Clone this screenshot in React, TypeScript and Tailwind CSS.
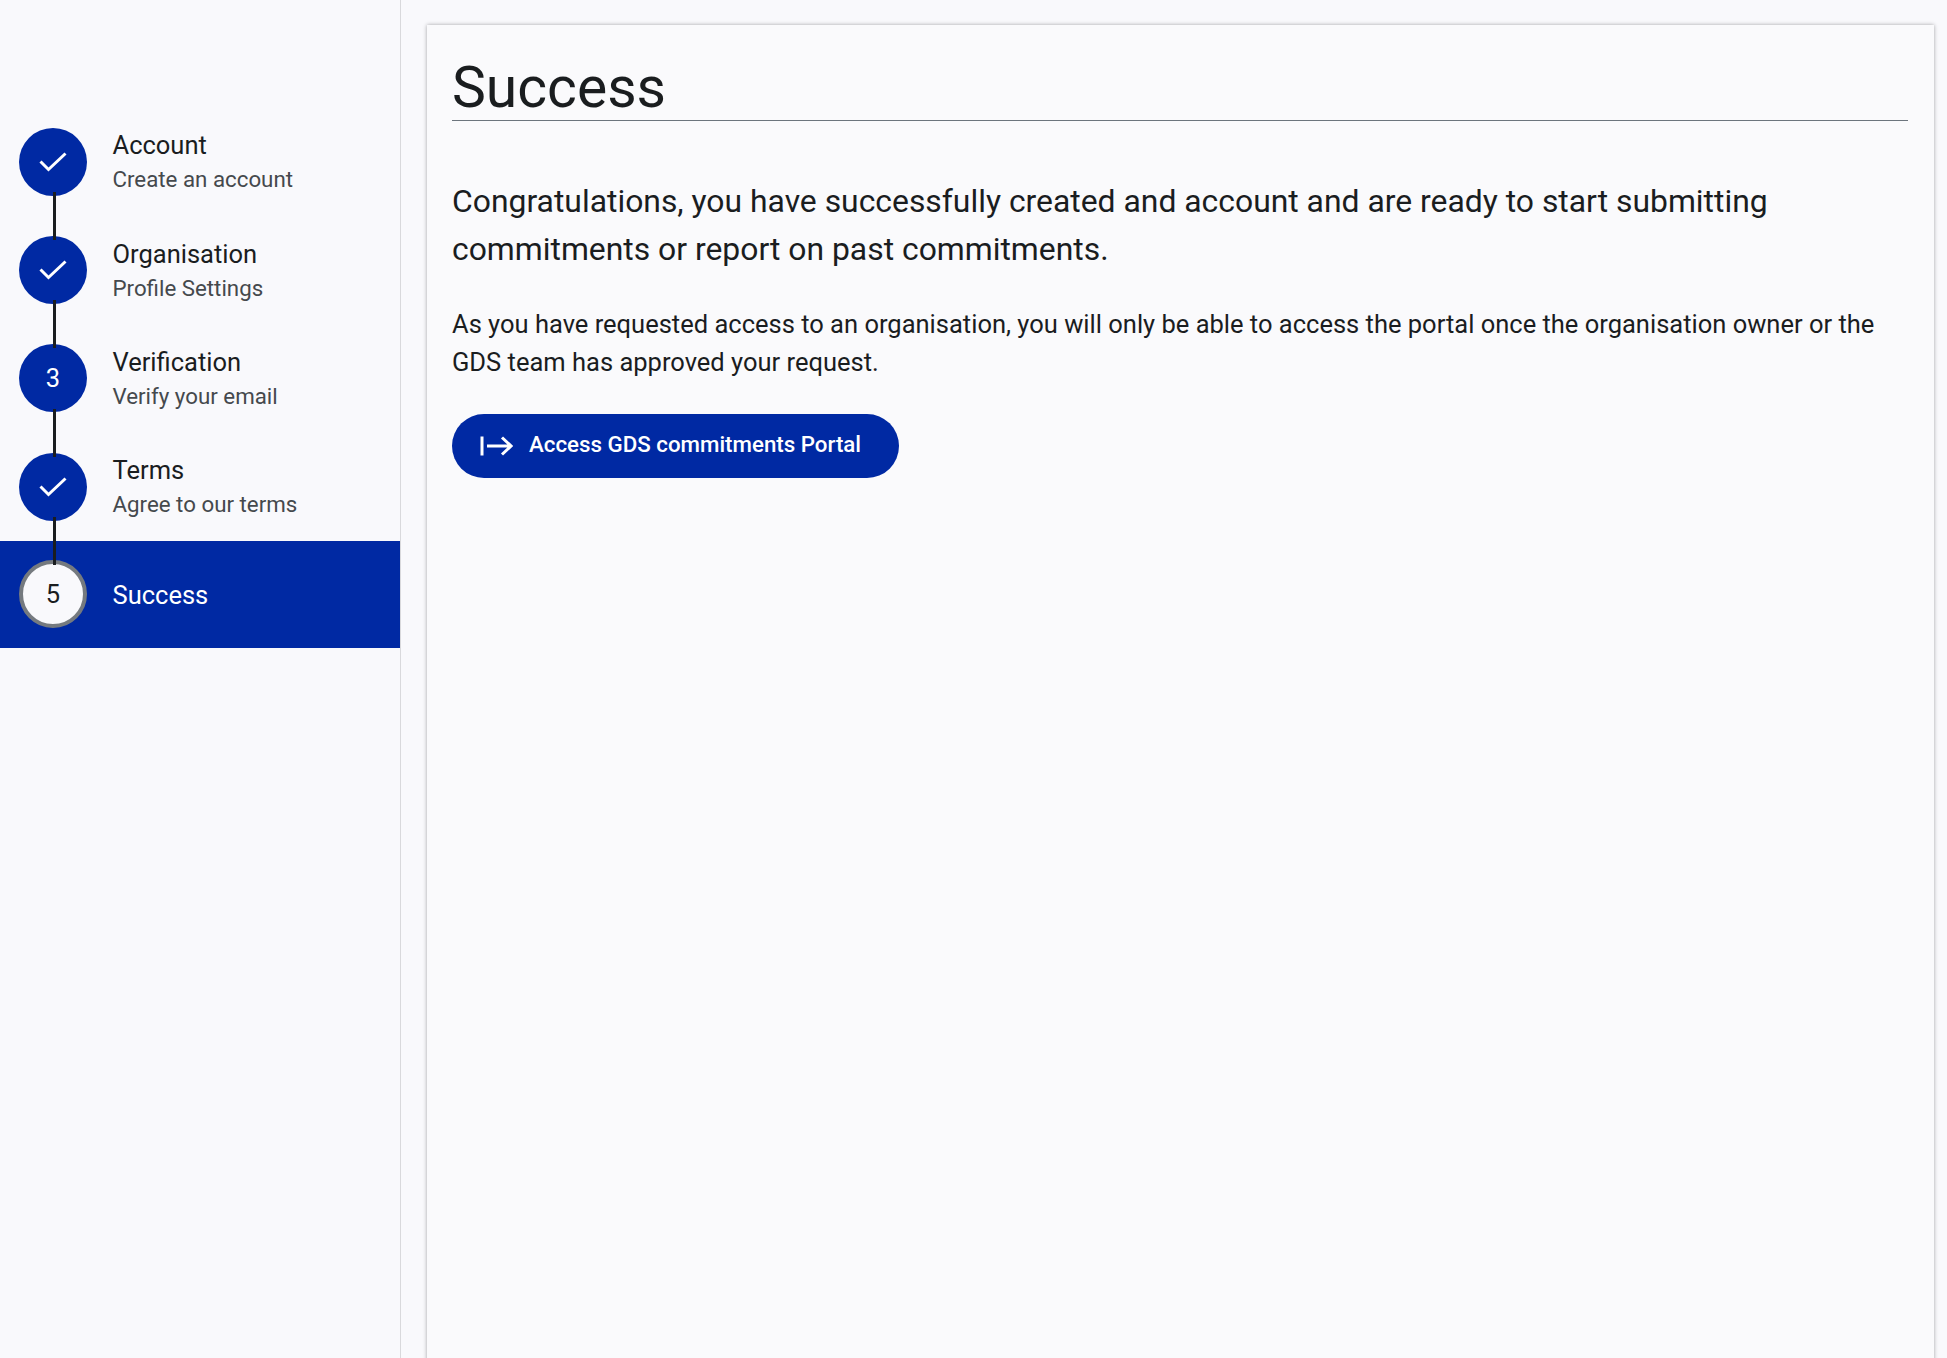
import React from "react";

const steps = [
  { title: "Account", sub: "Create an account", mark: "check" },
  { title: "Organisation", sub: "Profile Settings", mark: "check" },
  { title: "Verification", sub: "Verify your email", mark: "3" },
  { title: "Terms", sub: "Agree to our terms", mark: "check" },
  { title: "Success", sub: "", mark: "5", active: true },
];

function Check() {
  return (
    <svg width="28" height="22" viewBox="0 0 28 22" fill="none" stroke="white" strokeWidth="3">
      <path d="M1.5 10.5 L9.5 18.5 L26.5 2.5" />
    </svg>
  );
}

export default function App() {
  return (
    <div className="flex h-[1358px] overflow-hidden bg-[#f9f9fc] font-['Roboto',sans-serif] text-[#1a1d1f]">
      <aside className="w-[401px] shrink-0 border-r border-[#d9d9dc] pt-[107.75px]">
        {steps.map((s, i) => (
          <div
            key={s.title}
            className={`relative flex items-center pl-[19px] ${s.active ? "h-[107px] bg-[#0029a3] text-white" : "h-[108.3px]"}`}
          >
            {i > 0 && (
              <div className="absolute left-[53px] top-[-24px] z-10 h-[48px] w-[3px] bg-[#1a1d1f]" />
            )}
            <div
              className={`flex h-[68px] w-[68px] shrink-0 items-center justify-center rounded-full text-[25.5px] ${
                s.active
                  ? "border-[4px] border-[#757a7f] bg-[#f9f9fc] text-[#1a1d1f]"
                  : "bg-[#0029a3] text-white"
              }`}
            >
              {s.mark === "check" ? <Check /> : s.mark}
            </div>
            <div className="ml-[25.5px] mt-[1px]">
              <div className="text-[25.5px] leading-[34px]">{s.title}</div>
              {s.sub && <div className="text-[22.3px] leading-[34px] text-[#45494d]">{s.sub}</div>}
            </div>
          </div>
        ))}
      </aside>
      <main className="flex-1 pl-[26px] pr-[13px] pt-[25px]">
        <div className="h-[1400px] bg-[#fafafc] pl-[25px] pr-[26px] shadow-[0_0_4px_rgba(0,0,0,0.35)]">
          <h1 className="border-b border-[#6c757d] pt-[31px] text-[57px] font-normal leading-[64px]">Success</h1>
          <p className="mt-[56px] text-[31.875px] leading-[48px]">
            Congratulations, you have successfully created and account and are ready to start submitting commitments or report on past commitments.
          </p>
          <p className="mt-[32px] text-[25.5px] leading-[38.25px]">
            As you have requested access to an organisation, you will only be able to access the portal once the organisation owner or the GDS team has approved your request.
          </p>
          <button className="mt-[32px] flex h-[64px] w-[447px] items-center rounded-full bg-[#0029a3] pb-[2px] pl-[28px] text-[22.3px] font-medium text-white">
            <svg className="mt-[2px]" width="33" height="22" viewBox="0 0 33 22" fill="none" stroke="white" strokeWidth="3">
              <path d="M2 1.5 V20.5 M7 11 H31 M22 2.5 L31 11 L22 19.5" />
            </svg>
            <span className="ml-[16px]">Access GDS commitments Portal</span>
          </button>
        </div>
      </main>
    </div>
  );
}
